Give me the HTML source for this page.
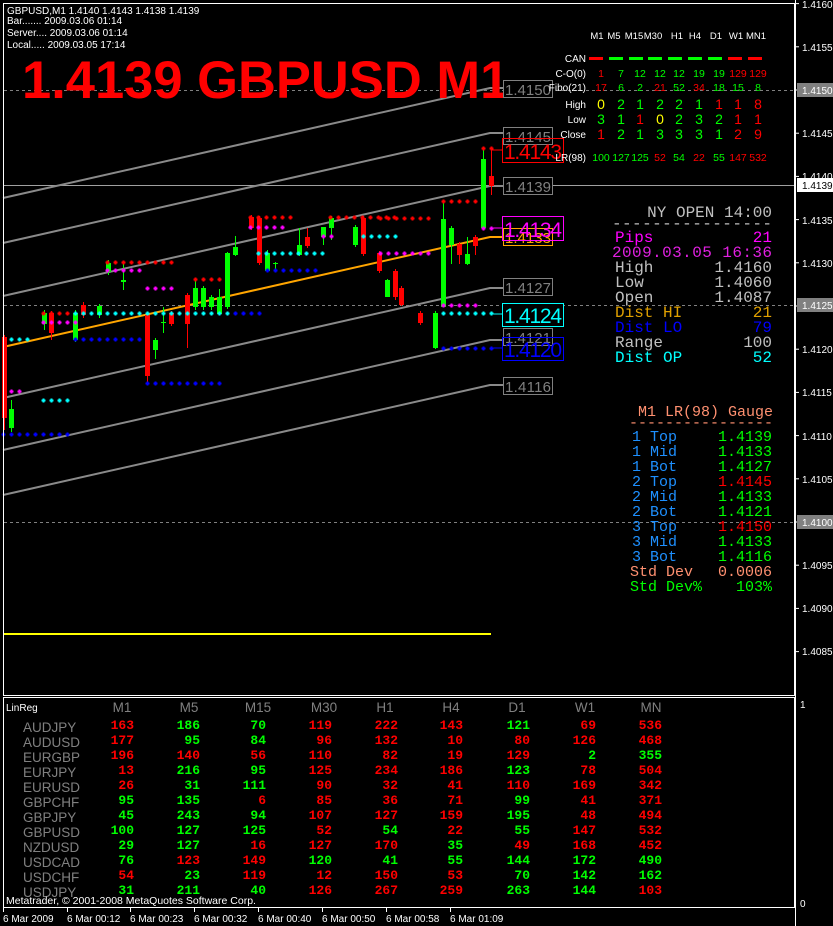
<!DOCTYPE html>
<html><head><meta charset="utf-8"><style>
html,body{margin:0;padding:0;background:#000;width:833px;height:926px;overflow:hidden}
svg{display:block}
.s{font-family:"Liberation Sans",sans-serif}
.m{font-family:"Liberation Mono",monospace}
</style></head><body>
<svg id="c" width="833" height="926" viewBox="0 0 833 926" xmlns="http://www.w3.org/2000/svg">
<rect width="833" height="926" fill="#000"/>
<g id="dyn"></g>
<rect x="3.5" y="3.5" width="791" height="692" fill="none" stroke="#fff"/>
<rect x="3.5" y="697.5" width="791" height="210" fill="none" stroke="#fff"/>
<line x1="795.5" y1="0" x2="795.5" y2="926" stroke="#fff"/>
<g class="s" fill="#fff" font-size="10">
<text x="7" y="14">GBPUSD,M1  1.4140 1.4143 1.4138 1.4139</text>
<text x="7" y="24">Bar....... 2009.03.06 01:14</text>
<text x="7" y="36">Server.... 2009.03.06 01:14</text>
<text x="7" y="48">Local..... 2009.03.05 17:14</text>
</g>
<text x="22" y="98" class="s" font-weight="bold" font-size="52.5" fill="#ff0000">1.4139 GBPUSD M1</text>
<g class="s" fill="#fff" font-size="10">
<text x="802" y="8">1.4160</text><text x="802" y="51">1.4155</text>
<text x="802" y="137">1.4145</text><text x="802" y="180">1.4140</text>
<text x="802" y="224">1.4135</text><text x="802" y="267">1.4130</text>
<text x="802" y="353">1.4120</text><text x="802" y="396">1.4115</text>
<text x="802" y="440">1.4110</text><text x="802" y="483">1.4105</text>
<text x="802" y="569">1.4095</text><text x="802" y="612">1.4090</text>
<text x="802" y="655">1.4085</text>
</g>
<rect x="797" y="83" width="36" height="14" fill="#808080"/><text x="802" y="94" class="s" fill="#fff" font-size="10">1.4150</text>
<rect x="797" y="298" width="36" height="14" fill="#808080"/><text x="802" y="309" class="s" fill="#fff" font-size="10">1.4125</text>
<rect x="797" y="515" width="36" height="14" fill="#808080"/><text x="802" y="526" class="s" fill="#fff" font-size="10">1.4100</text>
<rect x="797" y="178" width="36" height="14" fill="#fff"/><text x="802" y="189" class="s" fill="#000" font-size="10">1.4139</text>
<g class="s" font-size="15">
<rect x="503.5" y="80.5" width="49" height="17" fill="#000" stroke="#808080"/><text x="505" y="95" fill="#808080" textLength="46">1.4150</text>
<rect x="503.5" y="127.5" width="49" height="17" fill="none" stroke="#808080"/><text x="505" y="142" fill="#808080" textLength="46">1.4145</text>
<rect x="503.5" y="177.5" width="49" height="17" fill="#000" stroke="#808080"/><text x="505" y="192" fill="#808080" textLength="46">1.4139</text>
<rect x="503.5" y="228.5" width="49" height="17" fill="#000" stroke="#ffa500"/><text x="505" y="243" fill="#ffa500" textLength="46">1.4133</text>
<rect x="503.5" y="278.5" width="49" height="17" fill="#000" stroke="#808080"/><text x="505" y="293" fill="#808080" textLength="46">1.4127</text>
<rect x="503.5" y="328.5" width="49" height="17" fill="#000" stroke="#808080"/><text x="505" y="343" fill="#808080" textLength="46">1.4121</text>
<rect x="503.5" y="377.5" width="49" height="17" fill="#000" stroke="#808080"/><text x="505" y="392" fill="#808080" textLength="46">1.4116</text>
</g>
<g class="s" font-size="21">
<rect x="502.5" y="138.5" width="61" height="24" fill="none" stroke="#ff0000"/><text x="504" y="159" fill="#ff0000" textLength="58">1.4143</text>
<rect x="502.5" y="216.5" width="61" height="24" fill="none" stroke="#ff00ff"/><text x="504" y="237" fill="#ff00ff" textLength="58">1.4134</text>
<rect x="502.5" y="303.5" width="61" height="23" fill="#000" stroke="#00ffff"/><text x="504" y="323" fill="#00ffff" textLength="58">1.4124</text>
<rect x="502.5" y="337.5" width="61" height="23" fill="none" stroke="#0000ff"/><text x="504" y="357" fill="#0000ff" textLength="58">1.4120</text>
</g>
<g class="s" fill="#fff" font-size="9.5" text-anchor="middle">
<text x="597" y="39">M1</text><text x="614" y="39">M5</text><text x="634" y="39">M15</text><text x="653" y="39">M30</text><text x="677" y="39">H1</text><text x="695" y="39">H4</text><text x="716" y="39">D1</text><text x="736" y="39">W1</text><text x="756" y="39">MN1</text>
</g>
<g class="s" fill="#fff" font-size="10" text-anchor="end">
<text x="586" y="62">CAN</text><text x="586" y="77">C-O(0)</text><text x="586" y="91">Fibo(21)</text><text x="586" y="108">High</text><text x="586" y="123">Low</text><text x="586" y="138">Close</text><text x="586" y="161">LR(98)</text>
</g>
<rect x="589" y="57" width="14" height="3" fill="#f00"/><rect x="609" y="57" width="14" height="3" fill="#0f0"/><rect x="629" y="57" width="14" height="3" fill="#0f0"/><rect x="648" y="57" width="14" height="3" fill="#0f0"/><rect x="668" y="57" width="14" height="3" fill="#0f0"/><rect x="688" y="57" width="14" height="3" fill="#0f0"/><rect x="708" y="57" width="14" height="3" fill="#0f0"/><rect x="728" y="57" width="14" height="3" fill="#f00"/><rect x="748" y="57" width="14" height="3" fill="#f00"/>
<g class="s" font-size="10.5" text-anchor="middle">
<text y="77"><tspan x="601" fill="#f00">1</tspan><tspan x="621" fill="#0f0">7</tspan><tspan x="640" fill="#0f0">12</tspan><tspan x="660" fill="#0f0">12</tspan><tspan x="679" fill="#0f0">12</tspan><tspan x="699" fill="#0f0">19</tspan><tspan x="719" fill="#0f0">19</tspan><tspan x="738" fill="#f00">129</tspan><tspan x="758" fill="#f00">129</tspan></text>
<text y="91"><tspan x="601" fill="#f00">17</tspan><tspan x="621" fill="#0f0">6</tspan><tspan x="640" fill="#0f0">2</tspan><tspan x="660" fill="#f00">21</tspan><tspan x="679" fill="#0f0">52</tspan><tspan x="699" fill="#f00">34</tspan><tspan x="719" fill="#0f0">18</tspan><tspan x="738" fill="#0f0">15</tspan><tspan x="758" fill="#0f0">8</tspan></text>
<text y="161"><tspan x="601" fill="#0f0">100</tspan><tspan x="621" fill="#0f0">127</tspan><tspan x="640" fill="#0f0">125</tspan><tspan x="660" fill="#f00">52</tspan><tspan x="679" fill="#0f0">54</tspan><tspan x="699" fill="#f00">22</tspan><tspan x="719" fill="#0f0">55</tspan><tspan x="738" fill="#f00">147</tspan><tspan x="758" fill="#f00">532</tspan></text>
</g>
<g class="s" font-size="14" text-anchor="middle">
<text y="109"><tspan x="601" fill="#ff0">0</tspan><tspan x="621" fill="#0f0">2</tspan><tspan x="640" fill="#0f0">1</tspan><tspan x="660" fill="#0f0">2</tspan><tspan x="679" fill="#0f0">2</tspan><tspan x="699" fill="#0f0">1</tspan><tspan x="719" fill="#f00">1</tspan><tspan x="738" fill="#f00">1</tspan><tspan x="758" fill="#f00">8</tspan></text>
<text y="124"><tspan x="601" fill="#0f0">3</tspan><tspan x="621" fill="#0f0">1</tspan><tspan x="640" fill="#f00">1</tspan><tspan x="660" fill="#ff0">0</tspan><tspan x="679" fill="#0f0">2</tspan><tspan x="699" fill="#0f0">3</tspan><tspan x="719" fill="#0f0">2</tspan><tspan x="738" fill="#f00">1</tspan><tspan x="758" fill="#f00">1</tspan></text>
<text y="139"><tspan x="601" fill="#f00">1</tspan><tspan x="621" fill="#0f0">2</tspan><tspan x="640" fill="#0f0">1</tspan><tspan x="660" fill="#0f0">3</tspan><tspan x="679" fill="#0f0">3</tspan><tspan x="699" fill="#0f0">3</tspan><tspan x="719" fill="#0f0">1</tspan><tspan x="738" fill="#f00">2</tspan><tspan x="758" fill="#f00">9</tspan></text>
</g>
<g class="m" font-size="16">
<text x="772" y="217" text-anchor="end" fill="#c0c0c0">NY OPEN 14:00</text>
<text x="772" y="228" text-anchor="end" fill="#c0c0c0" textLength="160">----------------</text>
<text x="615" y="242" fill="#ff00ff">Pips</text><text x="772" y="242" text-anchor="end" fill="#ff00ff">21</text>
<text x="612" y="257" fill="#e020e0" textLength="160">2009.03.05 16:36</text>
<text x="615" y="272" fill="#c0c0c0">High</text><text x="772" y="272" text-anchor="end" fill="#c0c0c0">1.4160</text>
<text x="615" y="287" fill="#c0c0c0">Low</text><text x="772" y="287" text-anchor="end" fill="#c0c0c0">1.4060</text>
<text x="615" y="302" fill="#c0c0c0">Open</text><text x="772" y="302" text-anchor="end" fill="#c0c0c0">1.4087</text>
<text x="615" y="317" fill="#e0a000">Dist HI</text><text x="772" y="317" text-anchor="end" fill="#e0a000">21</text>
<text x="615" y="332" fill="#0000ff">Dist LO</text><text x="772" y="332" text-anchor="end" fill="#0000ff">79</text>
<text x="615" y="347" fill="#c0c0c0">Range</text><text x="772" y="347" text-anchor="end" fill="#c0c0c0">100</text>
<text x="615" y="362" fill="#00ffff">Dist OP</text><text x="772" y="362" text-anchor="end" fill="#00ffff">52</text>
</g>
<g class="m" font-size="15">
<text x="773" y="416" text-anchor="end" fill="#ff9070">M1 LR(98) Gauge</text>
<text x="773" y="427" text-anchor="end" fill="#ff9070">----------------</text>
<g fill="#1e90ff">
<text x="632" y="441">1 Top</text><text x="632" y="456">1 Mid</text><text x="632" y="471">1 Bot</text>
<text x="632" y="486">2 Top</text><text x="632" y="501">2 Mid</text><text x="632" y="516">2 Bot</text>
<text x="632" y="531">3 Top</text><text x="632" y="546">3 Mid</text><text x="632" y="561">3 Bot</text>
</g>
<g text-anchor="end">
<text x="772" y="441" fill="#0f0">1.4139</text><text x="772" y="456" fill="#0f0">1.4133</text><text x="772" y="471" fill="#0f0">1.4127</text>
<text x="772" y="486" fill="#f00">1.4145</text><text x="772" y="501" fill="#0f0">1.4133</text><text x="772" y="516" fill="#0f0">1.4121</text>
<text x="772" y="531" fill="#f00">1.4150</text><text x="772" y="546" fill="#0f0">1.4133</text><text x="772" y="561" fill="#0f0">1.4116</text>
<text x="772" y="576" fill="#ff9070">0.0006</text><text x="772" y="591" fill="#0f0">103%</text>
</g>
<text x="630" y="576" fill="#ff9070">Std Dev</text><text x="630" y="591" fill="#0f0">Std Dev%</text>
</g>
<text x="6" y="711" class="s" fill="#fff" font-size="10">LinReg</text>
<g class="s" fill="#808080" font-size="13.5" text-anchor="middle">
<text x="122" y="712">M1</text><text x="189" y="712">M5</text><text x="258" y="712">M15</text><text x="324" y="712">M30</text><text x="385" y="712">H1</text><text x="451" y="712">H4</text><text x="517" y="712">D1</text><text x="585" y="712">W1</text><text x="651" y="712">MN</text>
</g>
<g class="s" fill="#808080" font-size="13.5">
<text x="23" y="732">AUDJPY</text><text x="23" y="747">AUDUSD</text><text x="23" y="762">EURGBP</text><text x="23" y="777">EURJPY</text><text x="23" y="792">EURUSD</text><text x="23" y="807">GBPCHF</text><text x="23" y="822">GBPJPY</text><text x="23" y="837">GBPUSD</text><text x="23" y="852">NZDUSD</text><text x="23" y="867">USDCAD</text><text x="23" y="882">USDCHF</text><text x="23" y="897">USDJPY</text>
</g>
<g class="m" font-weight="bold" font-size="13" text-anchor="end">
<text y="729"><tspan x="134" fill="#f00">163</tspan><tspan x="200" fill="#0f0">186</tspan><tspan x="266" fill="#0f0">70</tspan><tspan x="332" fill="#f00">119</tspan><tspan x="398" fill="#f00">222</tspan><tspan x="463" fill="#f00">143</tspan><tspan x="530" fill="#0f0">121</tspan><tspan x="596" fill="#f00">69</tspan><tspan x="662" fill="#f00">536</tspan></text>
<text y="744"><tspan x="134" fill="#f00">177</tspan><tspan x="200" fill="#0f0">95</tspan><tspan x="266" fill="#0f0">84</tspan><tspan x="332" fill="#f00">96</tspan><tspan x="398" fill="#f00">132</tspan><tspan x="463" fill="#f00">10</tspan><tspan x="530" fill="#f00">80</tspan><tspan x="596" fill="#f00">126</tspan><tspan x="662" fill="#f00">468</tspan></text>
<text y="759"><tspan x="134" fill="#f00">196</tspan><tspan x="200" fill="#f00">140</tspan><tspan x="266" fill="#f00">56</tspan><tspan x="332" fill="#f00">110</tspan><tspan x="398" fill="#f00">82</tspan><tspan x="463" fill="#f00">19</tspan><tspan x="530" fill="#f00">129</tspan><tspan x="596" fill="#0f0">2</tspan><tspan x="662" fill="#0f0">355</tspan></text>
<text y="774"><tspan x="134" fill="#f00">13</tspan><tspan x="200" fill="#0f0">216</tspan><tspan x="266" fill="#0f0">95</tspan><tspan x="332" fill="#f00">125</tspan><tspan x="398" fill="#f00">234</tspan><tspan x="463" fill="#f00">186</tspan><tspan x="530" fill="#0f0">123</tspan><tspan x="596" fill="#f00">78</tspan><tspan x="662" fill="#f00">504</tspan></text>
<text y="789"><tspan x="134" fill="#f00">26</tspan><tspan x="200" fill="#0f0">31</tspan><tspan x="266" fill="#0f0">111</tspan><tspan x="332" fill="#f00">90</tspan><tspan x="398" fill="#f00">32</tspan><tspan x="463" fill="#f00">41</tspan><tspan x="530" fill="#f00">110</tspan><tspan x="596" fill="#f00">169</tspan><tspan x="662" fill="#f00">342</tspan></text>
<text y="804"><tspan x="134" fill="#0f0">95</tspan><tspan x="200" fill="#0f0">135</tspan><tspan x="266" fill="#f00">6</tspan><tspan x="332" fill="#f00">85</tspan><tspan x="398" fill="#f00">36</tspan><tspan x="463" fill="#f00">71</tspan><tspan x="530" fill="#0f0">99</tspan><tspan x="596" fill="#f00">41</tspan><tspan x="662" fill="#f00">371</tspan></text>
<text y="819"><tspan x="134" fill="#0f0">45</tspan><tspan x="200" fill="#0f0">243</tspan><tspan x="266" fill="#0f0">94</tspan><tspan x="332" fill="#f00">107</tspan><tspan x="398" fill="#f00">127</tspan><tspan x="463" fill="#f00">159</tspan><tspan x="530" fill="#0f0">195</tspan><tspan x="596" fill="#f00">48</tspan><tspan x="662" fill="#f00">494</tspan></text>
<text y="834"><tspan x="134" fill="#0f0">100</tspan><tspan x="200" fill="#0f0">127</tspan><tspan x="266" fill="#0f0">125</tspan><tspan x="332" fill="#f00">52</tspan><tspan x="398" fill="#0f0">54</tspan><tspan x="463" fill="#f00">22</tspan><tspan x="530" fill="#0f0">55</tspan><tspan x="596" fill="#f00">147</tspan><tspan x="662" fill="#f00">532</tspan></text>
<text y="849"><tspan x="134" fill="#0f0">29</tspan><tspan x="200" fill="#0f0">127</tspan><tspan x="266" fill="#f00">16</tspan><tspan x="332" fill="#f00">127</tspan><tspan x="398" fill="#f00">170</tspan><tspan x="463" fill="#0f0">35</tspan><tspan x="530" fill="#f00">49</tspan><tspan x="596" fill="#f00">168</tspan><tspan x="662" fill="#f00">452</tspan></text>
<text y="864"><tspan x="134" fill="#0f0">76</tspan><tspan x="200" fill="#f00">123</tspan><tspan x="266" fill="#f00">149</tspan><tspan x="332" fill="#0f0">120</tspan><tspan x="398" fill="#0f0">41</tspan><tspan x="463" fill="#0f0">55</tspan><tspan x="530" fill="#0f0">144</tspan><tspan x="596" fill="#0f0">172</tspan><tspan x="662" fill="#0f0">490</tspan></text>
<text y="879"><tspan x="134" fill="#f00">54</tspan><tspan x="200" fill="#0f0">23</tspan><tspan x="266" fill="#f00">119</tspan><tspan x="332" fill="#f00">12</tspan><tspan x="398" fill="#f00">150</tspan><tspan x="463" fill="#f00">53</tspan><tspan x="530" fill="#0f0">70</tspan><tspan x="596" fill="#0f0">142</tspan><tspan x="662" fill="#0f0">162</tspan></text>
<text y="894"><tspan x="134" fill="#0f0">31</tspan><tspan x="200" fill="#0f0">211</tspan><tspan x="266" fill="#0f0">40</tspan><tspan x="332" fill="#f00">126</tspan><tspan x="398" fill="#f00">267</tspan><tspan x="463" fill="#f00">259</tspan><tspan x="530" fill="#0f0">263</tspan><tspan x="596" fill="#0f0">144</tspan><tspan x="662" fill="#f00">103</tspan></text>
</g>
<text x="6" y="904" class="s" fill="#fff" font-size="10.5">Metatrader, © 2001-2008 MetaQuotes Software Corp.</text>
<text x="800" y="708" class="s" fill="#fff" font-size="10">1</text>
<text x="800" y="907" class="s" fill="#fff" font-size="10">0</text>
<g class="s" fill="#fff" font-size="10">
<text x="3" y="922">6 Mar 2009</text><text x="67" y="922">6 Mar 00:12</text><text x="130" y="922">6 Mar 00:23</text><text x="194" y="922">6 Mar 00:32</text><text x="258" y="922">6 Mar 00:40</text><text x="322" y="922">6 Mar 00:50</text><text x="386" y="922">6 Mar 00:58</text><text x="450" y="922">6 Mar 01:09</text>
</g>
</svg>
<script>
(function(){
var ns="http://www.w3.org/2000/svg",g=document.getElementById('dyn');
function el(t,a){var e=document.createElementNS(ns,t);for(var k in a)e.setAttribute(k,a[k]);g.appendChild(e);return e;}
el('line',{x1:4,y1:90.5,x2:795,y2:90.5,stroke:'#808080','stroke-dasharray':'3,3'});
el('line',{x1:4,y1:305.5,x2:795,y2:305.5,stroke:'#808080','stroke-dasharray':'3,3'});
el('line',{x1:4,y1:522.5,x2:795,y2:522.5,stroke:'#808080','stroke-dasharray':'3,3'});
el('line',{x1:4,y1:185.5,x2:795,y2:185.5,stroke:'#a0a0a0'});
el('line',{x1:4,y1:634,x2:491,y2:634,stroke:'#ffff00','stroke-width':2});
[88,133,186,237,288,340,385].forEach(function(y){
 el('polyline',{points:'3,'+(y+110)+' 490,'+y+' 503,'+y,fill:'none',stroke:y==237?'#ffa500':'#8a8a8a','stroke-width':2});
});
var C=[[4,337,418,'r',335,430],[11,409,428,'g',400,432],[44,313,324,'g',310,330],[51,313,333,'r',311,340],[75,313,340,'g',310,342],[83,305,315,'r',302,318],[99,306,315,'g',304,318],
[108,263,272,'g',260,275],[123,280,282,'g',263,290],[147,315,376,'r',312,382],[155,340,350,'g',338,359],[163,322,323,'g',307,333],[171,313,324,'r',311,326],[187,295,324,'r',293,348],
[195,288,307,'g',280,310],[203,288,307,'g',286,310],[211,297,307,'g',295,310],[219,297,314,'g',289,314],[227,253,307,'g',252,309],[235,247,255,'g',236,256],[251,217,228,'r',215,230],
[259,218,263,'r',216,265],[267,253,271,'g',250,272],[275,263,264,'g',262,271],[299,245,255,'g',228,256],[307,237,246,'r',228,248],[323,227,237,'g',227,245],[331,218,228,'g',216,240],
[355,227,245,'g',225,247],[363,218,254,'r',216,256],[379,253,271,'r',251,273],[387,280,297,'g',279,297],[395,271,297,'r',269,300],[401,288,305,'r',286,306],[420,313,323,'r',311,325],
[435,313,348,'g',311,349],[443,219,307,'g',202,307],[451,228,245,'g',226,264],[459,244,255,'r',242,264],[467,254,264,'g',237,265],[475,237,246,'r',235,255],[483,159,228,'g',148,229],[491,176,186,'r',148,195]];
C.forEach(function(c){var col=c[3]=='r'?'#ff0000':'#00ff00';
 el('line',{x1:c[0]+0.5,y1:c[4],x2:c[0]+0.5,y2:c[5],stroke:col});
 el('rect',{x:c[0]-2,y:c[1],width:5,height:Math.max(1,c[2]-c[1]),fill:col});});
var R='#ff0000',M='#ff00ff',Cy='#00ffff',B='#0000ff';
var D=[[217,250,292,R],[217,330,395,R],[227,250,283,M],[253,258,323,Cy],[270,267,315,B],[262,107,171,R],[270,107,139,M],[279,195,219,R],[288,147,171,M],
[313,43,99,R],[313,75,259,Cy],[313,235,259,B],[322,43,75,M],[339,11,27,Cy],[339,75,139,B],[383,147,219,B],[391,11,19,M],[400,43,67,Cy],[434,3,67,B],
[148,483,491,R],[201,443,475,R],[218,380,430,R],[228,483,491,M],[253,380,435,M],[305,443,475,M],[313,443,491,Cy],[348,443,491,B],[236,363,395,Cy],[236,323,331,M]];
D.forEach(function(d){for(var x=d[1];x<=d[2];x+=8){el('rect',{x:x-0.5,y:d[0]-1.5,width:2,height:4,fill:d[3]});el('rect',{x:x-1.5,y:d[0]-0.5,width:4,height:2,fill:d[3]});}});
el('line',{x1:491,y1:150,x2:502,y2:150,stroke:'#ff0000'});
el('line',{x1:491,y1:228,x2:502,y2:228,stroke:'#ff00ff'});
el('line',{x1:491,y1:314,x2:502,y2:314,stroke:'#00ffff'});
el('line',{x1:491,y1:348,x2:502,y2:348,stroke:'#0000ff'});
for(var p=0;p<16;p++){var y=3.6+p*43.2;el('line',{x1:796,y1:y,x2:799,y2:y,stroke:'#fff'});}
[3,67,130,194,258,322,386,450].forEach(function(x){el('line',{x1:x+0.5,y1:908,x2:x+0.5,y2:912,stroke:'#fff'});});
})();
</script>
</body></html>
